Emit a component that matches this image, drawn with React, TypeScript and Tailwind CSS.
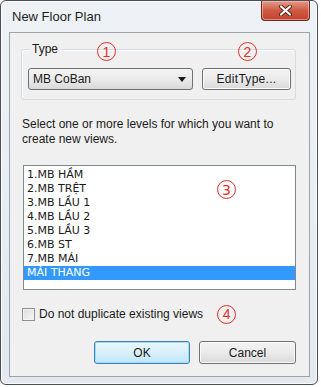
const UI = "font-['Segoe_UI','Liberation_Sans',Arial,sans-serif]";

const levels = [
  "1.MB HẦM",
  "2.MB TRỆT",
  "3.MB LẦU 1",
  "4.MB LẦU 2",
  "5.MB LẦU 3",
  "6.MB ST",
  "7.MB MÁI",
  "MÁI THANG",
];

function Marker({ n, className = "" }: { n: number; className?: string }) {
  return (
    <span
      className={`flex h-[19px] w-[19px] items-center justify-center rounded-full border border-[#e0302a] text-[14px] leading-none text-[#e0302a] ${className}`}
    >
      {n}
    </span>
  );
}

export default function App() {
  return (
    <div className={`h-[387px] w-[321px] bg-white ${UI} text-[12px] text-[#1a1a1a]`}>
      <div className="flex h-[385px] w-[318px] flex-col rounded-[6px] border border-[#4a4f55] bg-gradient-to-b from-[#eef2f6] to-[#e3e9ef] shadow-[inset_0_0_0_1px_#fbfcfd]">
        {/* title bar */}
        <div className="flex h-[31px] items-start justify-between">
          <span className="mt-[6px] ml-[11px] text-[13px] text-[#1e1e1e]">New Floor Plan</span>
          <button className="mr-[7px] flex h-[20px] w-[49px] items-center justify-center rounded-b-[4px] border border-t-0 border-[#6b2a22] bg-gradient-to-b from-[#e39a88] via-[#cf5a43] to-[#c3432c] shadow-[inset_0_0_0_1px_rgba(255,210,200,0.5)]">
            <svg width="13" height="11" viewBox="0 0 13 11">
              <path d="M2 1.5 L11 9.5 M11 1.5 L2 9.5" stroke="#5a2018" strokeWidth="4" strokeLinecap="round" />
              <path d="M2 1.5 L11 9.5 M11 1.5 L2 9.5" stroke="#ffffff" strokeWidth="2.2" strokeLinecap="round" />
            </svg>
          </button>
        </div>

        {/* client area */}
        <div className="ml-[8px] h-[345px] w-[301px] border border-[#9aa4ae] bg-[#f0f0f0]">
          {/* type group */}
          <div className="relative mt-[16px] ml-[11px] h-[51px] w-[275px] rounded-[3px] border border-[#d5dde3] shadow-[inset_1px_1px_0_#ffffff]">
            <span className="absolute -top-[10px] left-[8px] bg-[#f0f0f0] px-[2px] text-[12px]">Type</span>
            <Marker n={1} className="absolute -top-[8px] left-[75px]" />
            <Marker n={2} className="absolute -top-[8px] left-[216px]" />
            <div className="mt-[18px] ml-[6px] flex gap-[9px]">
              <div className="flex h-[22px] w-[165px] items-center justify-between rounded-[3px] border border-[#707070] bg-gradient-to-b from-[#f3f3f3] via-[#ebebeb] to-[#d9d9d9] pr-[6px] pl-[4px]">
                <span>MB CoBan</span>
                <svg width="8" height="5" viewBox="0 0 8 5">
                  <path d="M0 0 H8 L4 5 Z" fill="#1a1a1a" />
                </svg>
              </div>
              <button className="h-[22px] w-[89px] rounded-[3px] border border-[#707070] bg-gradient-to-b from-[#f3f3f3] via-[#ebebeb] to-[#d9d9d9] shadow-[inset_0_0_0_1px_#fbfbfb] tracking-[0.3px]">
                EditType...
              </button>
            </div>
          </div>

          <p className="mt-[17px] ml-[12px] w-[270px] leading-[15px]">
            Select one or more levels for which you want to create new views.
          </p>

          {/* level list */}
          <div className="relative mt-[18px] ml-[13px] h-[125px] w-[273px] border border-[#828790] bg-white pt-[2px] font-['DejaVu_Sans',sans-serif] text-[11px]">
            {levels.map((l, i) => (
              <div
                key={l}
                className={`h-[14px] pl-[3px] leading-[14px] ${
                  i === levels.length - 1 ? "bg-[#3399ff] text-white" : "text-[#1a1a1a]"
                }`}
              >
                {l}
              </div>
            ))}
            <Marker n={3} className="absolute top-[14px] left-[193px]" />
          </div>

          {/* checkbox */}
          <div className="mt-[17px] ml-[12px] flex h-[14px] items-center">
            <span className="h-[13px] w-[13px] border border-[#8e8f8f] bg-gradient-to-br from-[#dcdcdc] to-[#f7f7f7] shadow-[inset_0_0_0_1px_#f4f4f4]" />
            <span className="ml-[4px]">Do not duplicate existing views</span>
            <Marker n={4} className="ml-[14px]" />
          </div>

          {/* buttons */}
          <div className="mt-[20px] ml-[84px] flex gap-[9px]">
            <button className="h-[23px] w-[96px] rounded-[3px] border border-[#3c7fb1] bg-gradient-to-b from-[#eaf6fd] via-[#d9f0fc] to-[#bee6fd] shadow-[inset_0_0_0_1px_#a6dcf7]">
              OK
            </button>
            <button className="h-[23px] w-[97px] rounded-[3px] border border-[#707070] bg-gradient-to-b from-[#f3f3f3] via-[#ebebeb] to-[#d9d9d9] shadow-[inset_0_0_0_1px_#fbfbfb]">
              Cancel
            </button>
          </div>
        </div>
      </div>
    </div>
  );
}
